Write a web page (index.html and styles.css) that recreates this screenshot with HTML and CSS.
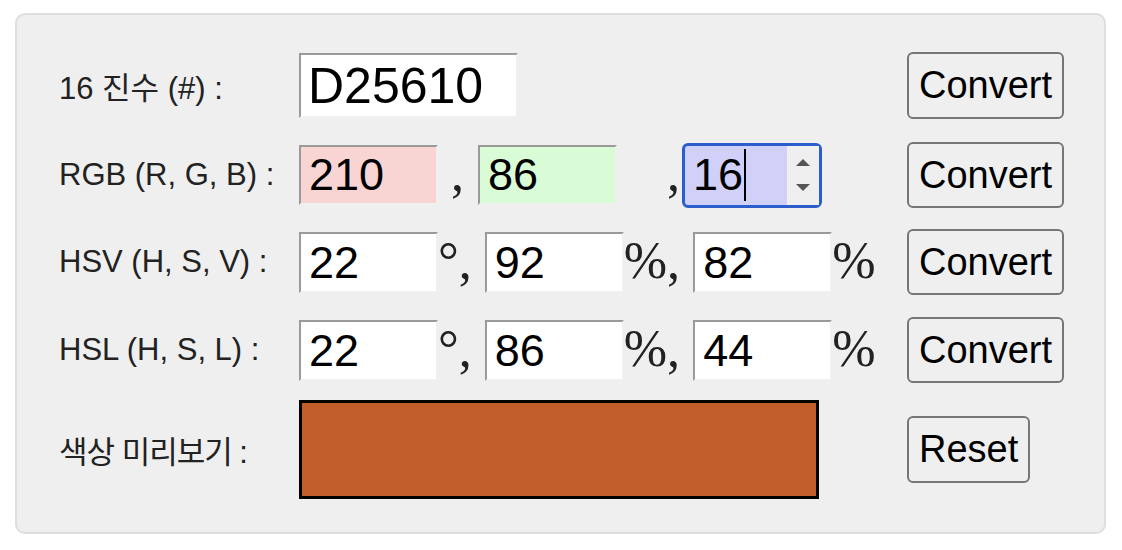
FILE: index.html
```html
<!DOCTYPE html>
<html lang="ko">
<head>
<meta charset="utf-8">
<title>Color Converter</title>
<link rel="stylesheet" href="styles.css">
</head>
<body>
<div class="panel">
  <div class="row row-hex">
    <label class="label">16 진수 (#) :</label>
    <div class="controls">
      <input class="field hex" type="text" value="D25610">
    </div>
    <button class="btn btn-tall">Convert</button>
  </div>

  <div class="row row-rgb">
    <label class="label">RGB (R, G, B) :</label>
    <div class="controls">
      <input class="field num num-r" type="text" value="210"><span class="sep sep-rg">,</span><input class="field num num-g" type="text" value="86"><span class="sep sep-gb">,</span><div class="focus-field"><span class="focus-text">16</span><span class="caret"></span><span class="spin"><span class="spin-up"></span><span class="spin-down"></span></span></div>
    </div>
    <button class="btn">Convert</button>
  </div>

  <div class="row row-hsv">
    <label class="label">HSV (H, S, V) :</label>
    <div class="controls">
      <input class="field num" type="text" value="22"><span class="sep">°, </span><input class="field num" type="text" value="92"><span class="sep">%, </span><input class="field num" type="text" value="82"><span class="sep">%</span>
    </div>
    <button class="btn">Convert</button>
  </div>

  <div class="row row-hsl">
    <label class="label">HSL (H, S, L) :</label>
    <div class="controls">
      <input class="field num" type="text" value="22"><span class="sep">°, </span><input class="field num" type="text" value="86"><span class="sep">%, </span><input class="field num" type="text" value="44"><span class="sep">%</span>
    </div>
    <button class="btn">Convert</button>
  </div>

  <div class="row row-preview">
    <label class="label label-ko">색상 미리보기 :</label>
    <div class="controls">
      <div class="preview"></div>
    </div>
    <button class="btn btn-reset">Reset</button>
  </div>
</div>
</body>
</html>
```

FILE: styles.css
```css
body {
  margin: 0;
  background: #ffffff;
  font-family: "Liberation Sans", "Noto Sans CJK KR", sans-serif;
}

.panel {
  margin: 13px 0 0 15px;
  width: 1091px;
  height: 521px;
  box-sizing: border-box;
  border: 2px solid #dedede;
  border-radius: 10px;
  background: #efefef;
  padding: 37px 0 0 42px;
}

.row {
  display: grid;
  grid-template-columns: 240px 608px auto;
  align-items: center;
  height: 66px;
}

.row-hex { height: 67px; }
.row-rgb { margin-top: 23px; }
.row-hsv { margin-top: 21px; }
.row-hsl { margin-top: 22px; }
.row-preview { margin-top: 17px; height: 99px; }

.label {
  font-family: "Liberation Sans", "Noto Sans CJK KR", sans-serif;
  font-size: 31px;
  color: #222222;
  white-space: nowrap;
}

.label-ko {
  letter-spacing: -1px;
}

.controls {
  display: flex;
  align-items: baseline;
  white-space: pre;
}

.field {
  box-sizing: border-box;
  margin: 0;
  border-width: 2px;
  border-style: solid;
  border-color: #9a9a9a #f0f0f0 #f0f0f0 #9a9a9a;
  background: #ffffff;
  color: #000000;
  font-family: "Liberation Sans", sans-serif;
  outline: none;
}

.hex {
  width: 219px;
  height: 65px;
  padding: 0 4px 0 7px;
  font-size: 50px;
}

.num {
  width: 139px;
  height: 61px;
  padding: 0 5px 0 8px;
  font-size: 45px;
}

.num-r { background: #f8d4d3; height: 60px; }
.num-g { background: #d9fcd6; height: 60px; }

.sep {
  font-family: "Liberation Serif", serif;
  font-size: 52px;
  color: #222222;
}

.sep-rg { padding: 0 14px 0 13px; }
.sep-gb { padding: 0 2px 0 50px; }

.focus-field {
  box-sizing: border-box;
  display: flex;
  align-items: center;
  width: 140px;
  height: 65px;
  border: 3px solid #2c5dcd;
  border-radius: 6px;
  background: #d0d0f8;
  padding-left: 8px;
  font-family: "Liberation Sans", sans-serif;
  font-size: 45px;
  color: #000000;
}

.caret {
  width: 2px;
  height: 52px;
  background: #000000;
  margin-left: 1px;
}

.spin {
  margin-left: auto;
  align-self: stretch;
  width: 32px;
  background: #efefef;
  display: flex;
  flex-direction: column;
  align-items: center;
  justify-content: center;
  gap: 18px;
}

.spin-up {
  width: 0;
  height: 0;
  border-left: 7px solid transparent;
  border-right: 7px solid transparent;
  border-bottom: 7px solid #555555;
}

.spin-down {
  width: 0;
  height: 0;
  border-left: 7px solid transparent;
  border-right: 7px solid transparent;
  border-top: 7px solid #555555;
}

.btn {
  justify-self: start;
  box-sizing: border-box;
  height: 66px;
  padding: 0 10px;
  border: 2px solid #767676;
  border-radius: 6px;
  background: #efefef;
  color: #000000;
  font-family: "Liberation Sans", sans-serif;
  font-size: 38px;
}

.btn-tall { height: 67px; }
.btn-reset { height: 67px; }

.preview {
  box-sizing: border-box;
  width: 520px;
  height: 99px;
  border: 3px solid #000000;
  background: #c25e29;
}
```
